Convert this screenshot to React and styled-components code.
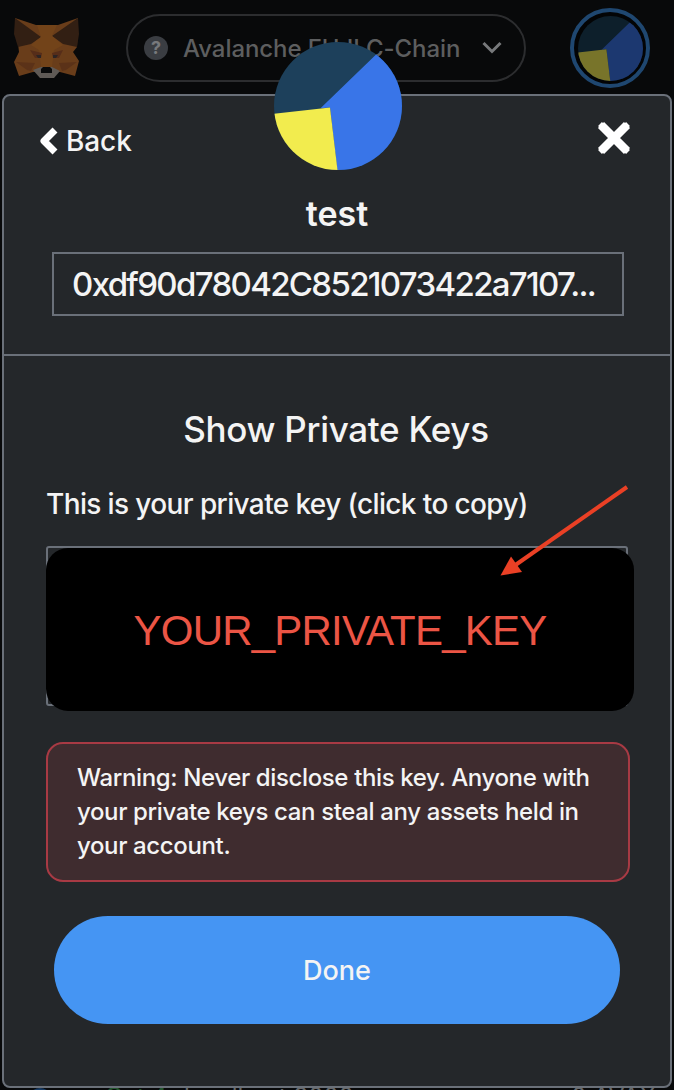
import React from 'react';
import styled, { createGlobalStyle } from 'styled-components';

const Global = createGlobalStyle`
  * { box-sizing: border-box; }
  body { margin: 0; background: #08090a; font-family: Inter, "Liberation Sans", sans-serif; }
  button { font: inherit; color: inherit; background: none; border: 0; padding: 0; }
`;

const Page = styled.div`
  width: 674px;
  height: 1090px;
  overflow: hidden;
  background: #08090a;
  display: flex;
  flex-direction: column;
`;

const Header = styled.header`
  flex: none;
  height: 94px;
  padding: 8px 24px 0 13px;
  display: flex;
  justify-content: space-between;
  align-items: flex-start;
`;

const Fox = styled.svg`
  width: 68px;
  height: 64px;
  margin-top: 8px;
`;

const NetworkPicker = styled.button`
  width: 400px;
  height: 68px;
  margin: 6px 0 0 1px;
  padding: 0 22px 0 16px;
  border: 2px solid #2c2d2f;
  border-radius: 34px;
  display: flex;
  align-items: center;
  color: #5d5e5f;
`;

const HelpDot = styled.span`
  width: 24px;
  height: 24px;
  border-radius: 50%;
  background: #3a3d42;
  color: #77797c;
  font-size: 18px;
  font-weight: 700;
  line-height: 24px;
  text-align: center;
`;

const NetworkName = styled.span`
  flex: 1;
  margin-left: 15px;
  text-align: left;
  white-space: nowrap;
  font-size: 24px;
  font-weight: 500;
  letter-spacing: -0.08px;
`;

const AccountRing = styled.div`
  width: 80px;
  height: 80px;
  border-radius: 50%;
  border: 4px solid #1f4770;
  background: #030405;
  display: grid;
  place-items: center;
`;

const Panel = styled.main`
  flex: none;
  position: relative;
  height: 994px;
  margin: 0 2px;
  background: #24272a;
  border: 2px solid #6a7079;
  border-radius: 8px;
  color: #f4f4f4;
  display: flex;
  flex-direction: column;
`;

const AvatarBadge = styled.div`
  position: absolute;
  left: 270px;
  top: -54px;
  width: 128px;
  height: 128px;
`;

const PanelHead = styled.section`
  flex: none;
  height: 260px;
  border-bottom: 2px solid #6a7079;
  display: flex;
  flex-direction: column;
  align-items: center;
`;

const NavRow = styled.div`
  width: 100%;
  height: 90px;
  padding: 24px 39px 0 35px;
  display: flex;
  justify-content: space-between;
  align-items: flex-start;
`;

const BackButton = styled.button`
  display: flex;
  align-items: center;
  gap: 8px;
  height: 42px;
  font-size: 28px;
  font-weight: 500;
  letter-spacing: -0.1px;
`;

const CloseButton = styled.button`
  height: 36px;
  line-height: 0;
`;

const AccountName = styled.h2`
  margin: 6px 0 0;
  height: 44px;
  line-height: 44px;
  font-size: 34px;
  font-weight: 600;
`;

const AddressBox = styled.div`
  width: 572px;
  height: 64px;
  margin: 16px 0 0 2px;
  padding-left: 18px;
  border: 2px solid #6a7079;
  line-height: 61px;
  font-size: 33px;
  font-weight: 500;
  letter-spacing: -1.67px;
  white-space: nowrap;
`;

const Body = styled.section`
  padding: 50px 40px 0 42px;
  display: flex;
  flex-direction: column;
`;

const Title = styled.h1`
  margin: 0 4px 0 0;
  line-height: 47px;
  padding-bottom: 1px;
  font-size: 35px;
  font-weight: 500;
  text-align: center;
  letter-spacing: -0.3px;
`;

const KeyLabel = styled.p`
  margin: 26px 0 0;
  line-height: 48px;
  font-size: 28px;
  font-weight: 500;
  letter-spacing: -0.62px;
  white-space: nowrap;
`;

const KeyField = styled.div`
  width: 582px;
  height: 160px;
  margin-top: 18px;
  border: 2px solid #6a7079;
  border-radius: 3px;
`;

const KeyCover = styled.div`
  width: 588px;
  height: 163px;
  margin-left: -2px;
  border-radius: 22px;
  background: #000;
  color: #ec5545;
  font-family: "Liberation Sans", Arial, sans-serif;
  font-size: 42px;
  line-height: 166px;
  letter-spacing: -0.8px;
  text-align: center;
`;

const Warning = styled.p`
  width: 584px;
  height: 140px;
  margin: 36px 0 0;
  padding: 17px 29px;
  border: 2px solid #a83a44;
  border-radius: 17px;
  background: #3f2c2f;
  font-size: 24px;
  font-weight: 500;
  line-height: 34px;
  letter-spacing: -0.37px;
  white-space: nowrap;
`;

const DoneButton = styled.button`
  width: 566px;
  height: 108px;
  margin: 34px 0 0 8px;
  border-radius: 54px;
  background: #4595f3;
  font-size: 27px;
  font-weight: 500;
`;

const Pointer = styled.svg`
  position: absolute;
  left: 494px;
  top: 386px;
  width: 134px;
  height: 98px;
`;

const SiteRow = styled.footer`
  flex: none;
  height: 2px;
  overflow: hidden;
  padding: 0 18px 0 28px;
  display: flex;
  align-items: flex-start;
  font-size: 24px;
  line-height: 18px;
  color: #66686a;
`;

const SiteMark = styled.span`
  width: 24px;
  height: 24px;
  margin-right: 53px;
  border-radius: 50%;
  background: #183b63;
`;

const SiteDate = styled.span`
  width: 79px;
  color: #24552f;
`;

const SiteName = styled.span`
  flex: 1;
`;

const foxShapes = [
  ['#693d1a', '2,2 23,9 45,9 65,2 64,31 60,36 66,45 62,60 47,56 20,56 6,60 1,46 6,36'],
  ['#321f13', '2,2 28,21 18,28 5,31 1,18'],
  ['#321f13', '65,2 39,20 50,28 64,31 66,18'],
  ['#724319', '24,9 44,9 39,20 50,29 41,34 39,51 28,51 26,34 18,29 28,21'],
  ['#562d19', '17,34 29,37 28,42 22,42'],
  ['#562d19', '50,34 39,37 40,42 46,42'],
  ['#5b3218', '3,46 22,47 18,55 14,54'],
  ['#5b3218', '64,46 46,47 49,55 53,54'],
  ['#2c2424', '23,39 28,39 28,42 25,42'],
  ['#2c2424', '45,39 40,39 40,42 43,42'],
  ['#5f5a56', '20,54 28,51 39,51 47,55 41,62 27,62'],
  ['#090a0b', '30,51 37,51 39,53 39,57 28,57 28,53'],
];

const FoxLogo = () => (
  <Fox viewBox="0 0 68 64">
    {foxShapes.map(([fill, points], i) => <polygon key={i} fill={fill} points={points} />)}
  </Fox>
);

const Pie = ({ size, id, base, blue, yellow }) => (
  <svg width={size} height={size} viewBox="0 0 128 128" display="block">
    <clipPath id={id}><circle cx="64" cy="64" r="64" /></clipPath>
    <g clipPath={`url(#${id})`}>
      <rect width="128" height="128" fill={base} />
      <polygon points="46.5,66.3 115,0 128,0 128,128 63.3,128 56,65.5" fill={blue} />
      <polygon points="0,71.7 56,65.5 63.5,128 0,128" fill={yellow} />
    </g>
  </svg>
);

export default function App() {
  return (
    <Page>
      <Global />
      <Header>
        <FoxLogo />
        <NetworkPicker>
          <HelpDot>?</HelpDot>
          <NetworkName>Avalanche FUJI C-Chain</NetworkName>
          <svg width="20" height="14" viewBox="0 0 20 14" fill="none" stroke="#77797b" strokeWidth="3">
            <path d="M1.5 2 10 10.5 18.5 2" />
          </svg>
        </NetworkPicker>
        <AccountRing>
          <Pie size={65} id="pie-small" base="#0d1f2b" blue="#1c3870" yellow="#78742a" />
        </AccountRing>
      </Header>

      <Panel>
        <PanelHead>
          <NavRow>
            <BackButton>
              <svg width="19" height="28" viewBox="0 0 19 28" fill="none" stroke="#fff" strokeWidth="7">
                <path d="M16 3 5 14 16 25" strokeLinejoin="round" />
              </svg>
              Back
            </BackButton>
            <CloseButton aria-label="Close">
              <svg width="34" height="34" viewBox="0 0 34 34" stroke="#fff">
                <path d="M4 4 30 30M30 4 4 30" strokeWidth="8.6" />
                <path d="M3 3 31 31M31 3 3 31" strokeWidth="5.5" />
              </svg>
            </CloseButton>
          </NavRow>
          <AccountName>test</AccountName>
          <AddressBox>0xdf90d78042C8521073422a7107...</AddressBox>
        </PanelHead>

        <Body>
          <Title>Show Private Keys</Title>
          <KeyLabel>This is your private key (click to copy)</KeyLabel>
          <KeyField>
            <KeyCover>YOUR_PRIVATE_KEY</KeyCover>
          </KeyField>
          <Warning>
            Warning: Never disclose this key. Anyone with<br />
            your private keys can steal any assets held in<br />
            your account.
          </Warning>
          <DoneButton>Done</DoneButton>
        </Body>

        <AvatarBadge>
          <Pie size={128} id="pie-large" base="#1d405b" blue="#3975e8" yellow="#f2ec4e" />
        </AvatarBadge>
        <Pointer viewBox="0 0 134 98">
          <path d="M129 5 16 84" stroke="#ea4025" strokeWidth="4" />
          <polygon points="2.5,93.5 13,74.5 24,90" fill="#ea4025" />
        </Pointer>
      </Panel>

      <SiteRow>
        <SiteMark />
        <SiteDate>Oct 4</SiteDate>
        <SiteName>localhost:3000</SiteName>
        <span>-0 AVAX</span>
      </SiteRow>
    </Page>
  );
}
